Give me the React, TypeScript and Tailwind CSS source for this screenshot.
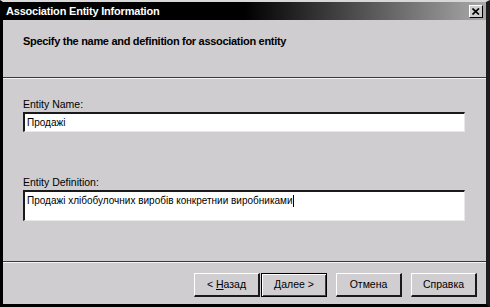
import React from "react";

function Btn({ children, def }: { children: React.ReactNode; def?: boolean }) {
  return (
    <div
      className={
        "w-[66px] h-[24px] flex items-center justify-center text-[10.5px] text-black bg-[#d0ced0] " +
        (def
          ? "border border-black shadow-[inset_1px_1px_0_#ffffff,inset_-1px_-1px_0_#404040]"
          : "border-t border-l border-t-white border-l-white border-r-2 border-b-2 border-r-[#1a1a1a] border-b-[#1a1a1a]")
      }
    >
      <span className="whitespace-pre">{children}</span>
    </div>
  );
}

export default function App() {
  return (
    <div
      className="w-[490px] h-[307px] flex flex-col bg-[#cfcdcf] border-t-2 border-t-[#d8d8d8] border-l-[3px] border-l-black border-r-[4px] border-r-[#1c1c1c] border-b-[3px] border-b-black overflow-hidden"
      style={{ fontFamily: '"Liberation Sans", Arial, sans-serif' }}
    >
      {/* title bar */}
      <div className="h-[18px] shrink-0 flex items-center justify-between pl-[3px] pr-[3px] bg-[linear-gradient(to_right,#000000_0%,#000000_50%,#a9a9a9_100%)]">
        <span className="text-white font-bold text-[11px] leading-none tracking-[-0.2px]">Association Entity Information</span>
        <div className="w-[14px] h-[13px] bg-[#cfcdcf] border-t border-l border-t-white border-l-white border-r border-b border-r-black border-b-black flex items-center justify-center">
          <svg width="8" height="7" viewBox="0 0 8 7">
            <path d="M0.5 0.5 L7 6.5 M7 0.5 L0.5 6.5" stroke="#000" strokeWidth="1.7" />
          </svg>
        </div>
      </div>

      {/* header */}
      <div className="h-[57px] pl-[20px] pt-[8px] shrink-0">
        <span className="font-bold text-[11px] leading-[16px] tracking-[-0.3px] text-black">Specify the name and definition for association entity</span>
      </div>
      <div className="h-px bg-[#3a3a3a] shrink-0" />
      <div className="h-px bg-[#f4f4f4] shrink-0" />

      {/* body */}
      <div className="h-[182px] shrink-0 pl-[20px] pt-[19px] flex flex-col">
        <div className="text-[10.5px] leading-[13px] text-black">Entity Name:</div>
        <div className="mt-[1px] w-[442px] h-[20px] bg-white border-t-2 border-l-2 border-t-[#1a1a1a] border-l-[#1a1a1a] border-r border-b border-r-[#e8e8e8] border-b-[#e8e8e8] flex items-center pl-[2px] text-[10px] text-black">
          Продажі
        </div>
        <div className="mt-[44px] text-[10.5px] leading-[13px] text-black">Entity Definition:</div>
        <div className="mt-[1px] w-[442px] h-[31px] bg-white border-t-2 border-l-2 border-t-[#1a1a1a] border-l-[#1a1a1a] border-r border-b border-r-[#e8e8e8] border-b-[#e8e8e8] pl-[2px] pt-[2px] text-[10px] leading-[13px] text-black">
          Продажі хлібобулочних виробів конкретнии виробниками<span className="inline-block w-px h-[12px] bg-black align-middle" />
        </div>
      </div>
      <div className="h-px bg-[#3a3a3a] shrink-0" />
      <div className="h-px bg-[#f4f4f4] shrink-0" />

      {/* footer */}
      <div className="flex-1 flex items-start justify-end pt-[10px] pr-[9px]">
        <div className="flex gap-[1px]">
          <Btn>
            {"< "}
            <span className="underline">Н</span>
            {"азад"}
          </Btn>
          <Btn def>
            <span className="underline">Д</span>
            {"алее >"}
          </Btn>
        </div>
        <div className="w-[9px]" />
        <Btn>Отмена</Btn>
        <div className="w-[9px]" />
        <Btn>Справка</Btn>
      </div>
    </div>
  );
}
